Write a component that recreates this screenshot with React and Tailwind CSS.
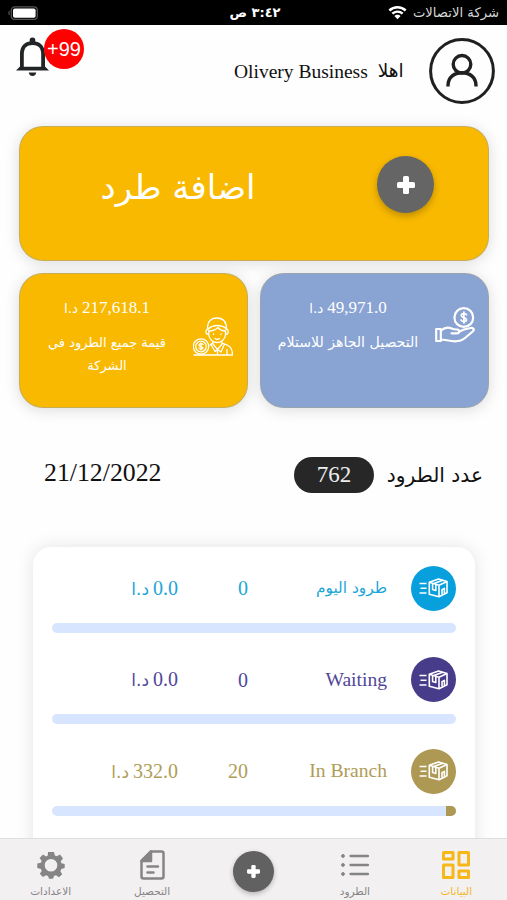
import React from "react";

const serif = "font-['Liberation_Serif','DejaVu_Sans',serif]";
const arabic = "font-['DejaVu_Sans',sans-serif]";

function Ar({ className = "", children }) {
  return (
    <span dir="rtl" className={`${arabic} inline-block whitespace-nowrap ${className}`}>
      {children}
    </span>
  );
}

function Money({ amount, className = "", unit = "text-[14px]" }) {
  return (
    <div dir="rtl" className={`${serif} flex items-baseline gap-1 whitespace-nowrap ${className}`}>
      <span>{amount}</span>
      <span className={`${arabic} ${unit}`}>د.ا</span>
    </div>
  );
}

function PlusIcon({ className }) {
  return (
    <svg viewBox="0 0 18 18" className={className} fill="white">
      <rect x="6" y="0" width="6" height="18" rx="1.6" />
      <rect x="0" y="6" width="18" height="6" rx="1.6" />
    </svg>
  );
}

function BoxIcon() {
  return (
    <svg viewBox="0 0 29 20" className="h-5 w-[29px]" fill="none" stroke="white" strokeWidth="1.6" strokeLinejoin="round">
      <path d="M0.5 5.500H7.5M1.5 10.2H7.5M0.5 15H7.5" />
      <path d="M10.3 4.2 19.5 1 28 3.6V14.8L20 18.7 10.3 16.3Z" />
      <path d="M10.3 4.2 20 7.2 28 3.6M20 7.2V18.7M14.8 5.6 23.8 2.3" />
      <path d="M13.600 6V11.4L16.8 12.4V7M23 16.5V11.8L25.4 10.4V15.5" />
    </svg>
  );
}

function StatusBar() {
  return (
    <div className="flex h-[25px] shrink-0 items-center bg-black pr-2 pl-2 text-white">
      <div className="flex w-[221px] items-center">
        <svg viewBox="0 0 30 14" className="h-[14px] w-[30px]">
          <path d="M1.6 4.5A3 3 0 0 0 1.6 9.5Z" fill="#555" />
          <rect x="3.3" y="0.9" width="26" height="12.4" rx="3.4" fill="none" stroke="#555" strokeWidth="1.3" />
          <rect x="5" y="2.4" width="22.6" height="9.4" rx="1.8" fill="white" />
        </svg>
      </div>
      <Ar className="w-[52px] text-center text-[13px] font-bold">٣:٤٢ ص</Ar>
      <svg viewBox="0 0 18 14" className="ml-[107px] h-[14px] w-[19px]" fill="white">
        <path d="M9 0C5.5 0 2.4 1.3 0 3.6L1.7 5.4A10.4 10.4 0 0 1 16.3 5.4L18 3.6C15.6 1.3 12.5 0 9 0Z" />
        <path d="M9 4.4C6.7 4.4 4.6 5.3 3 6.8L4.7 8.6A6.2 6.2 0 0 1 13.3 8.6L15 6.8A8.6 8.6 0 0 0 9 4.4Z" />
        <path d="M9 8.7C7.8 8.7 6.7 9.2 5.9 10L9 13.3 12.1 10C11.3 9.2 10.2 8.7 9 8.7Z" />
      </svg>
      <Ar className="ml-auto text-[13.200px] text-[#d8d8d8]">شركة الاتصالات</Ar>
    </div>
  );
}

function Header() {
  return (
    <header className="flex h-[101px] shrink-0 items-start">
      <div className="relative ml-[15px] h-[60px] w-[71px]">
        <svg viewBox="0 0 34 40" className="mt-3 h-10 w-[35px]">
          <path d="M17 0.5A2.8 2.8 0 0 0 14.2 3.5V5.2H19.8V3.5A2.8 2.8 0 0 0 17 .5Z" fill="#222526" />
          <path d="M4.500 29.500V17C4.500 8.500 9.500 4.300 17 4.300S29.500 8.500 29.500 17V29.500L33.500 33.500H.5Z" fill="#222526" />
          <path d="M8.300 29.800V17C8.300 11 11.500 7.900 17 7.900S25.700 11 25.700 17V29.800Z" fill="white" />
          <path d="M13.200 35.500H20.800Q20 39 17 39T13.200 35.500Z" fill="#222526" />
        </svg>
        <div className="absolute top-1 left-[29px] flex size-10 items-center justify-center rounded-full bg-[#fe0000] font-['Liberation_Sans',sans-serif] text-[20px] text-white">
          +99
        </div>
      </div>
      <div className={`${serif} mt-[33px] ml-[148px] text-[19.500px] leading-7 whitespace-nowrap text-[#111]`}>Olivery Business</div>
      <Ar className="mt-[34px] ml-[10px] text-[18.500px] leading-6 text-[#111]">اهلا</Ar>
      <svg viewBox="0 0 66 66" className="mt-[12.500px] mr-3 ml-auto size-[66px]" fill="none" stroke="#202022">
        <circle cx="33" cy="33" r="31.400" strokeWidth="3" />
        <circle cx="33" cy="26.300" r="8.800" strokeWidth="3.4" />
        <path d="M19 48.500V47.500C19 39.500 25 34.800 33 34.800S47 39.500 47 47.500V48.500" strokeWidth="3.400" />
      </svg>
    </header>
  );
}

function HandCoinIcon() {
  return (
    <svg viewBox="0 0 40 36" className="h-9 w-10" fill="none" stroke="white" strokeWidth="2.200" strokeLinejoin="round" strokeLinecap="round">
      <circle cx="28.800" cy="10.500" r="9.400" />
      <path d="M31.500 7.800C30.800 6 26.300 6 26.300 8.500S31.500 10.300 31.500 12.700 26.800 15 26 13M28.900 5V16" strokeWidth="1.700" />
      <path d="M1.200 22H5.800V34H1.200ZM6 23.500C9 21 13 20 16 21.200 18 22.200 20 22.500 22 22.500 25 22.700 24.700 26.300 22 26.300H16.500M24 24.700 29 22.500 35.500 21C38.500 20.500 39.800 22.800 37.700 24.500L30 31C27 33.700 23.500 34.300 20 34.300 14.500 34.300 10 32.500 6 32.500" />
    </svg>
  );
}

function WorkerIcon() {
  return (
    <svg viewBox="0 0 40 39" className="h-[39px] w-10" fill="none" stroke="white" strokeWidth="1.300" strokeLinejoin="round" strokeLinecap="round">
      <path d="M14.500 12C14.500 4.500 18 1 24 1S33.500 4.500 33.500 12M15 12C18 9.500 21 8.500 24 8.500S31 9.500 33.500 12M16 14C20 14 23 12.500 25 10.500 27 13 30 14 32.500 14" />
      <path d="M15.500 12C12 12 12 17.500 15.800 17.500M33 12C36 12 36 17.500 32.500 17.500M15.800 14V18C16.500 22.500 20 25.500 24 25.500S32 22.500 32.500 18V14M20.500 17V17.500M28 17V17.500M22 21.500Q24.300 23 26.500 21.500" />
      <path d="M20 24.500V27L24.500 32.500 29 27V24.500M19 26.500 17 28M18 27.500 22 34.500 24.500 32.500 28 35 31.500 27M30 26.500C37 28.500 39.500 31 39.500 38H1M24.500 32.500V38M34 32.500V37" />
      <circle cx="8" cy="29.500" r="7.700" />
      <circle cx="8" cy="29.500" r="5.300" />
      <path d="M10 27.500C9 26 6 26.500 6 28.300S10 29.500 10 31 7 32.500 6 31M8 25.800V33" />
    </svg>
  );
}

function Summary() {
  const card = "rounded-[24px] border border-[#a5a594]/60 shadow-[0_2px_15px_rgba(0,0,0,0.14)]";
  return (
    <section className="flex shrink-0 flex-col gap-3 pr-[18px] pl-[19px]">
      <div className={`flex h-[135px] bg-[#f9b900] ${card}`}>
        <div className="ml-[58px] w-[200px] pt-[36px] text-center">
          <Ar className="text-[34px] leading-[48px] text-white">اضافة طرد</Ar>
        </div>
        <button className="mt-[29px] ml-[99px] flex size-[57px] items-center justify-center rounded-full bg-[#656565] shadow-[0_3px_7px_rgba(0,0,0,0.25)]">
          <PlusIcon className="size-[18px]" />
        </button>
      </div>
      <div className="grid h-[135px] grid-cols-2 gap-3">
        <div className={`flex bg-[#f9b900] text-white ${card}`}>
          <div className="ml-[17px] flex w-[140px] flex-col items-center pt-[22px]">
            <Money amount="217,618.1" className="text-[17px] leading-6" unit="text-[13.500px]" />
            <div className="mt-[11px] flex flex-col items-center">
              <Ar className="text-[13px] leading-[23px]">قيمة جميع الطرود في</Ar>
              <Ar className="text-[13px] leading-[23px]">الشركة</Ar>
            </div>
          </div>
          <div className="mt-[43px] ml-[16px]"><WorkerIcon /></div>
        </div>
        <div className={`flex bg-[#89a3d3] text-white ${card}`}>
          <div className="ml-[16px] flex w-[142px] flex-col items-center pt-[22px]">
            <Money amount="49,971.0" className="text-[17px] leading-6" unit="text-[13.500px]" />
            <Ar className="mt-[11px] text-[14.100px] leading-[23px]">التحصيل الجاهز للاستلام</Ar>
          </div>
          <div className="mt-[33px] ml-[16px]"><HandCoinIcon /></div>
        </div>
      </div>
    </section>
  );
}

function CountRow() {
  return (
    <div className="mt-[49px] flex h-9 shrink-0 items-center pr-6 pl-[44px]">
      <div className={`${serif} -mt-1 text-[25.800px] leading-9 text-[#111]`}>21/12/2022</div>
      <div className={`${serif} ml-auto flex h-9 w-20 items-center justify-center rounded-[18px] bg-[#272727] text-[23px] text-[#eee]`}>762</div>
      <Ar className="ml-[13px] w-[96px] text-center text-[20.200px] leading-9 text-[#111]">عدد الطرود</Ar>
    </div>
  );
}

const rows = [
  { label: "طرود اليوم", rtl: true, count: "0", amount: "0.0", text: "text-[#1ca6d8]", bg: "bg-[#079fdc]", progress: 0 },
  { label: "Waiting", count: "0", amount: "0.0", text: "text-[#52469a]", bg: "bg-[#473c89]", progress: 0 },
  { label: "In Branch", count: "20", amount: "332.0", text: "text-[#b09c57]", bg: "bg-[#ae9954]", progress: 2.6 },
];

function Parcels() {
  return (
    <section className="mx-[33px] mr-8 mt-[54px] h-[340px] shrink-0 rounded-[18px] bg-white pt-[18px] pr-[19px] pl-[19px] shadow-[0_0_18px_rgba(0,0,0,0.11)]">
      {rows.map((r) => (
        <div key={r.label} className="h-[91.500px]">
          <div className={`flex h-[46px] items-center ${r.text}`}>
            <div className="flex w-[126px] justify-end">
              <Money amount={r.amount} className="text-[20px] leading-6" unit="text-[17px]" />
            </div>
            <div className={`${serif} w-[70px] text-right text-[20px]`}>{r.count}</div>
            <div className="flex w-[139px] justify-end">
              {r.rtl ? <Ar className="text-[15.400px] leading-6">{r.label}</Ar> : <span className={`${serif} text-[19.600px]`}>{r.label}</span>}
            </div>
            <div className={`ml-auto flex size-[45px] items-center justify-center rounded-full ${r.bg}`}>
              <BoxIcon />
            </div>
          </div>
          <div className="mt-[11.500px] flex h-[10px] justify-end overflow-hidden rounded-full bg-[#d7e5fe]">
            <div className={r.bg} style={{ width: `${r.progress}%` }} />
          </div>
        </div>
      ))}
    </section>
  );
}

function Tab({ label, className = "text-[#858585]", children }) {
  return (
    <div className={`flex flex-col items-center pt-[10px] ${className}`}>
      <div className="flex h-8 items-center">{children}</div>
      <Ar className="mt-[2px] text-[10.500px] leading-4">{label}</Ar>
    </div>
  );
}

function TabBar() {
  return (
    <nav className="relative grid h-[62px] shrink-0 grid-cols-5 border-t border-[#dedede] bg-[#f2f0f1]">
      <Tab label="الاعدادات">
        <svg viewBox="0 0 28 28" className="size-7" fill="currentColor">
          <path fillRule="evenodd" d="M11 1H17L17.800 4.500 19.800 5.300 23 3.400 26 7.500 23.800 10.300 24.400 12.200 27.700 13V17L24.300 18 23.400 20.200 25.200 23.300 22 26.200 18.900 24.300 17 25 16 27.800H12L11 25 9 24.200 5.900 26 2.800 22.800 4.700 19.900 3.900 18 .3 17V12.600L3.900 11.800 4.700 9.900 2.600 7 6 3.600 9 5.400 10.800 4.600ZM14 8A6.300 6.300 0 1 0 14 20.600 6.300 6.300 0 0 0 14 8Z" />
        </svg>
      </Tab>
      <Tab label="التحصيل">
        <svg viewBox="0 0 25 30" className="h-[30px] w-[25px]" fill="none" stroke="currentColor" strokeWidth="2.500" strokeLinejoin="round">
          <path d="M11 1.500H21.500Q23.500 1.500 23.500 3.500V26.500Q23.500 28.500 21.500 28.500H3.500Q1.500 28.500 1.500 26.500V11Z" />
          <path d="M11 1.500V11H1.500Z" fill="currentColor" />
          <path d="M7.500 16.500H18M7.500 22.500H13.500" strokeLinecap="round" />
        </svg>
      </Tab>
      <div className="flex justify-center pt-3">
        <button className="flex size-[41px] items-center justify-center rounded-full bg-[#616161] shadow-[0_2px_5px_rgba(0,0,0,0.25)]">
          <PlusIcon className="size-[13px]" />
        </button>
      </div>
      <Tab label="الطرود">
        <svg viewBox="0 0 28 24" className="h-6 w-7" fill="currentColor" stroke="currentColor">
          <path d="M9.500 3H27M9.500 12H27M9.500 21H27" strokeWidth="2.300" strokeLinecap="round" />
          <circle cx="2" cy="3" r="1.400" /><circle cx="2" cy="12" r="1.400" /><circle cx="2" cy="21" r="1.400" />
        </svg>
      </Tab>
      <Tab label="البيانات" className="text-[#f6b719]">
        <svg viewBox="0 0 28 28" className="size-7" fill="none" stroke="currentColor" strokeWidth="3" strokeLinejoin="round">
          <rect x="1.500" y="1.500" width="9.500" height="6.500" /><rect x="17" y="1.500" width="9.500" height="12.500" />
          <rect x="1.500" y="14" width="9.500" height="12.500" /><rect x="17" y="20" width="9.500" height="6.500" />
        </svg>
      </Tab>
    </nav>
  );
}

export default function App() {
  return (
    <div className="flex h-[900px] w-[507px] flex-col overflow-hidden bg-[#fefefe]">
      <StatusBar />
      <main className="flex min-h-0 flex-1 flex-col overflow-hidden">
        <Header />
        <Summary />
        <CountRow />
        <Parcels />
      </main>
      <TabBar />
    </div>
  );
}
